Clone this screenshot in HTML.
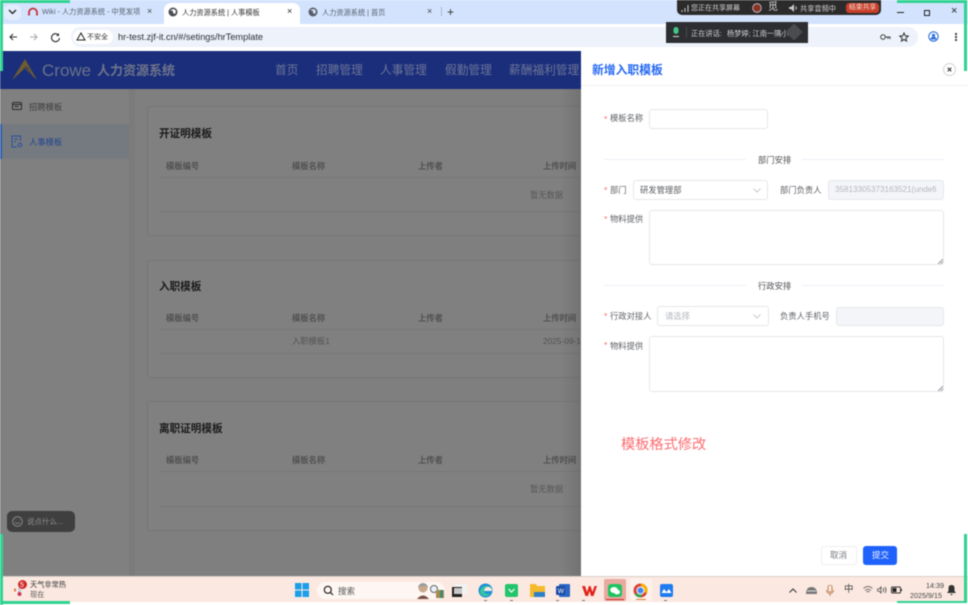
<!DOCTYPE html>
<html lang="zh"><head><meta charset="utf-8"><title>人力资源系统 | 人事模板</title>
<style>
*{box-sizing:border-box}
html,body{margin:0;padding:0;width:968px;height:605px;overflow:hidden;background:#fff}
body{font-family:"Liberation Sans","Noto Sans CJK SC",sans-serif}
#r{position:absolute;left:0;top:0;width:968px;height:605px;overflow:hidden;filter:blur(.5px)}
.a{position:absolute}
.t{position:absolute;white-space:nowrap;line-height:1}
.card{position:absolute;left:147px;width:470px;border:1px solid #777;border-right:0;background:#808080;border-radius:3px}
.ln{position:absolute;height:1px;background:#787878;left:159px;width:422px}
.th{position:absolute;white-space:nowrap;line-height:1;font-size:8.3px;color:#505050;font-weight:bold}
.h{position:absolute;white-space:nowrap;line-height:1;font-size:10.6px;color:#1a1a1a;font-weight:bold;left:159px}
.nav{position:absolute;white-space:nowrap;line-height:1;font-size:11.7px;color:#6f7697;top:64.500px}
.lab{position:absolute;white-space:nowrap;line-height:1;font-size:8.3px;color:#606266}
.st{position:absolute;white-space:nowrap;line-height:1;font-size:8.5px;color:#f56c6c;left:604px}
.inp{position:absolute;border:1px solid #e4e7ed;border-radius:3px;background:#fff}
.dis{background:#f4f5f9}
.g{position:absolute;background:#2ed392}
.sec{position:absolute;white-space:nowrap;line-height:1;font-size:8.3px;color:#505255;left:758px}
.dv{position:absolute;height:1px;background:#ebeef5}
</style></head><body><div id="r">

<!-- tab strip -->
<div class="a" style="left:0;top:0;width:968px;height:24px;background:#d3e3fd"></div>
<div class="a" style="left:4px;top:5px;width:17px;height:15px;background:#e4edfd;border-radius:5px"></div>
<svg class="a" style="left:8px;top:9px" width="9" height="6"><path d="M1 1l3.500 3.500L8 1" fill="none" stroke="#222" stroke-width="1.300"/></svg>
<svg class="a" style="left:27px;top:7px" width="12" height="9"><path d="M2 8.500V5.500a4 4 0 0 1 8 0v3" fill="none" stroke="#c8303a" stroke-width="1.800"/></svg>
<div class="t" style="left:42px;top:8px;font-size:7.200px;color:#555d6b;width:98px;overflow:hidden">Wiki - 人力资源系统 - 中竞发项目</div>
<div class="t" style="left:147px;top:7px;font-size:9px;color:#444">×</div>
<div class="a" style="left:164px;top:3px;width:136px;height:21px;background:#fff;border-radius:7px 7px 0 0"></div>
<svg class="a" style="left:168px;top:7px" width="10" height="10"><circle cx="5" cy="5" r="4.500" fill="#4a4d52"/><path d="M2 3l3 1 0 2 2 1 1-3-2-2z" fill="#fff"/></svg>
<div class="t" style="left:182px;top:8.500px;font-size:7.200px;color:#333">人力资源系统 | 人事模板</div>
<div class="t" style="left:287px;top:7px;font-size:9px;color:#222">×</div>
<svg class="a" style="left:308px;top:7px" width="10" height="10"><circle cx="5" cy="5" r="4.500" fill="#5a5e66"/><path d="M2 3l3 1 0 2 2 1 1-3-2-2z" fill="#d3e3fd"/></svg>
<div class="t" style="left:322px;top:8.500px;font-size:7.200px;color:#555d6b">人力资源系统 | 首页</div>
<div class="t" style="left:427px;top:7px;font-size:9px;color:#444">×</div>
<div class="a" style="left:441px;top:7px;width:1px;height:9px;background:#a9b8d4"></div>
<div class="t" style="left:447px;top:6px;font-size:12px;color:#333">+</div>
<div class="a" style="left:897px;top:12px;width:7px;height:1px;background:#222"></div>
<div class="a" style="left:924px;top:10px;width:6px;height:6px;border:1px solid #222;background:#d3e3fd"></div>
<div class="t" style="left:951px;top:6px;font-size:11px;color:#222">×</div>

<!-- toolbar -->
<div class="a" style="left:0;top:24px;width:968px;height:27px;background:#fff"></div>
<div class="a" style="left:71px;top:27px;width:847px;height:20px;background:#eef2fb;border-radius:10px"></div>
<div class="a" style="left:73px;top:30px;width:40px;height:14px;background:#fff;border-radius:7px"></div>
<svg class="a" style="left:8px;top:32px" width="10" height="10"><path d="M9 5H2M5 2L2 5l3 3" fill="none" stroke="#333" stroke-width="1.100"/></svg>
<svg class="a" style="left:29px;top:32px" width="10" height="10"><path d="M1 5h7M5 2l3 3-3 3" fill="none" stroke="#aaa" stroke-width="1.100"/></svg>
<svg class="a" style="left:50px;top:32px" width="11" height="11"><path d="M8.500 3A4 4 0 1 0 9.500 6" fill="none" stroke="#333" stroke-width="1.100"/><path d="M9 1v3H6z" fill="#333"/></svg>
<svg class="a" style="left:76px;top:32px" width="10" height="9"><path d="M5 1l4 7H1z" fill="none" stroke="#222" stroke-width="1"/></svg>
<div class="t" style="left:87px;top:34px;font-size:7px;color:#333">不安全</div>
<div class="t" style="left:118px;top:32.500px;font-size:9.200px;color:#2a2d33">hr-test.zjf-it.cn/#/setings/hrTemplate</div>
<svg class="a" style="left:880px;top:33px" width="11" height="9"><circle cx="3" cy="4" r="2.300" fill="none" stroke="#444"/><path d="M5 4h5v2M8 4v2" fill="none" stroke="#444"/></svg>
<svg class="a" style="left:899px;top:32px" width="10" height="10"><path d="M5 1l1.200 2.800 3 .3-2.300 2 .7 3L5 7.500 2.400 9.100l.7-3-2.300-2 3-.3z" fill="none" stroke="#333"/></svg>
<svg class="a" style="left:928px;top:31px" width="11" height="11"><circle cx="5.500" cy="5.500" r="4.700" fill="none" stroke="#2f6fd8" stroke-width="1.100"/><circle cx="5.500" cy="4.300" r="1.600" fill="#2f6fd8"/><path d="M2.500 8.500a3 3 0 0 1 6 0" fill="#2f6fd8"/></svg>
<div class="a" style="left:955px;top:33px;width:2px;height:2px;background:#444;box-shadow:0 3px #444,0 6px #444"></div>

<!-- app header -->
<div class="a" style="left:0;top:51px;width:581px;height:38px;background:#1a2e7c"></div>
<svg class="a" style="left:12px;top:59px" width="25" height="22"><path d="M13 0L0 21 12 10l1 0 12 11z" fill="#6f5c2e"/><path d="M13 8L7 21M14 8l3 13M15 8l7 13" stroke="#1a2e7c" stroke-width=".7"/></svg>
<div class="t" style="left:42px;top:61.500px;font-size:17px;color:#6b7189">Crowe</div>
<div class="t" style="left:97px;top:63.500px;font-size:13px;font-weight:bold;color:#6f7589">人力资源系统</div>
<div class="nav" style="left:275px">首页</div>
<div class="nav" style="left:316px">招聘管理</div>
<div class="nav" style="left:380px">人事管理</div>
<div class="nav" style="left:445px">假勤管理</div>
<div class="nav" style="left:509px">薪酬福利管理</div>

<!-- page background -->
<div class="a" style="left:0;top:89px;width:581px;height:488px;background:#808080"></div>
<div class="a" style="left:129px;top:89px;width:6px;height:488px;background:#7b7b7b"></div>
<div class="a" style="left:135px;top:89px;width:446px;height:482px;background:#7f7f7f"></div>
<div class="a" style="left:0;top:124px;width:129px;height:35px;background:#757a80"></div>
<div class="a" style="left:0;top:124px;width:2px;height:35px;background:#2c5cab"></div>
<svg class="a" style="left:12px;top:101px" width="10" height="10"><rect x=".5" y="1.500" width="9" height="7" rx="1" fill="none" stroke="#2a2a2a"/><path d="M1 3.500h8M2.500 5.500h4" stroke="#2a2a2a"/></svg>
<div class="t" style="left:29px;top:102.500px;font-size:8.300px;color:#3d3d3d">招聘模板</div>
<svg class="a" style="left:11px;top:135px" width="12" height="13"><path d="M9.500 6V1H1v11h5M3 4h4M3 6.500h2" fill="none" stroke="#274f9e"/><circle cx="9" cy="10" r="1.800" fill="none" stroke="#274f9e"/></svg>
<div class="t" style="left:29px;top:137.500px;font-size:8.300px;color:#22468f">人事模板</div>
<div class="a" style="left:7px;top:511px;width:68px;height:21px;background:#3f3f3f;border-radius:5px"></div>
<svg class="a" style="left:12px;top:516px" width="11" height="11"><circle cx="5.500" cy="5.500" r="4.800" fill="none" stroke="#888"/><path d="M3 6.500q2.500 2 5 0" fill="none" stroke="#888"/><path d="M3.500 4h.8M7 4h.8" stroke="#888"/></svg>
<div class="t" style="left:27px;top:518px;font-size:7.500px;color:#8f8f8f">说点什么...</div>

<!-- cards -->
<div class="card" style="top:106px;height:130px"></div>
<div class="h" style="top:128.500px">开证明模板</div>
<div class="th" style="left:166px;top:161.500px">模板编号</div><div class="th" style="left:292px;top:161.500px">模板名称</div><div class="th" style="left:418px;top:161.500px">上传者</div><div class="th" style="left:543px;top:161.500px">上传时间</div>
<div class="ln" style="top:177px"></div><div class="ln" style="top:211px"></div>
<div class="t" style="left:530px;top:190.500px;font-size:8.300px;color:#565656">暂无数据</div>

<div class="card" style="top:260px;height:118px"></div>
<div class="h" style="top:281.500px">入职模板</div>
<div class="th" style="left:166px;top:314px">模板编号</div><div class="th" style="left:292px;top:314px">模板名称</div><div class="th" style="left:418px;top:314px">上传者</div><div class="th" style="left:543px;top:314px">上传时间</div>
<div class="ln" style="top:329px"></div><div class="ln" style="top:353px"></div>
<div class="t" style="left:292px;top:337px;font-size:8.300px;color:#525252">入职模板1</div>
<div class="t" style="left:543px;top:337px;font-size:8.300px;color:#525252">2025-09-1</div>

<div class="card" style="top:401px;height:130px"></div>
<div class="h" style="top:423.500px">离职证明模板</div>
<div class="th" style="left:166px;top:456px">模板编号</div><div class="th" style="left:292px;top:456px">模板名称</div><div class="th" style="left:418px;top:456px">上传者</div><div class="th" style="left:543px;top:456px">上传时间</div>
<div class="ln" style="top:471px"></div><div class="ln" style="top:506px"></div>
<div class="t" style="left:530px;top:485px;font-size:8.300px;color:#565656">暂无数据</div>
<div class="a" style="left:560px;top:89px;width:21px;height:488px;background:linear-gradient(90deg,rgba(0,0,0,0),rgba(0,0,0,.1))"></div>

<!-- drawer -->
<div class="a" style="left:581px;top:51px;width:387px;height:526px;background:#fff"></div>
<div class="a" style="left:581px;top:85px;width:387px;height:1px;background:#f0f0f2"></div>
<div class="t" style="left:592px;top:64.500px;font-size:11.800px;font-weight:bold;color:#2468f2">新增入职模板</div>
<svg class="a" style="left:943px;top:63px" width="13" height="13"><circle cx="6.500" cy="6.500" r="6" fill="#fff" stroke="#d4d4d4"/><path d="M4.700 4.700l3.600 3.600M8.300 4.700l-3.600 3.600" stroke="#444" stroke-width="1.200"/></svg>

<div class="st" style="top:115px">*</div><div class="lab" style="left:610px;top:114px">模板名称</div>
<div class="inp" style="left:649px;top:109px;width:119px;height:20px"></div>

<div class="dv" style="left:604px;top:159px;width:142px"></div>
<div class="sec" style="top:156px">部门安排</div>
<div class="dv" style="left:802px;top:159px;width:142px"></div>

<div class="st" style="top:186px">*</div><div class="lab" style="left:610px;top:186px">部门</div>
<div class="inp" style="left:633px;top:180px;width:135px;height:20px"></div>
<div class="t" style="left:640px;top:186px;font-size:8.300px;color:#5a5c60">研发管理部</div>
<svg class="a" style="left:753px;top:188px" width="8" height="5"><path d="M.5 .5L4 4 7.500 .5" fill="none" stroke="#b8bcc4" stroke-width=".8"/></svg>
<div class="lab" style="left:780px;top:186px">部门负责人</div>
<div class="inp dis" style="left:828px;top:180px;width:116px;height:20px"></div>
<div class="t" style="left:835px;top:186px;font-size:8.100px;color:#b4b7bd;width:104px;overflow:hidden">35813305373163521(undefi</div>

<div class="st" style="top:215px">*</div><div class="lab" style="left:610px;top:215px">物料提供</div>
<div class="inp" style="left:649px;top:210px;width:295px;height:55px"></div>
<svg class="a" style="left:938px;top:259px" width="5" height="5"><path d="M0 5L5 0M2.500 5L5 2.500" stroke="#888" stroke-width=".8"/></svg>

<div class="dv" style="left:604px;top:285px;width:142px"></div>
<div class="sec" style="top:282px">行政安排</div>
<div class="dv" style="left:802px;top:285px;width:142px"></div>

<div class="st" style="top:312px">*</div><div class="lab" style="left:610px;top:312px">行政对接人</div>
<div class="inp" style="left:657px;top:306px;width:112px;height:20px"></div>
<div class="t" style="left:665px;top:312px;font-size:8.300px;color:#b4b7bd">请选择</div>
<svg class="a" style="left:753px;top:314px" width="8" height="5"><path d="M.5 .5L4 4 7.500 .5" fill="none" stroke="#b8bcc4" stroke-width=".8"/></svg>
<div class="lab" style="left:780px;top:312px">负责人手机号</div>
<div class="inp dis" style="left:836px;top:307px;width:108px;height:19px"></div>

<div class="st" style="top:341px">*</div><div class="lab" style="left:610px;top:341.500px">物料提供</div>
<div class="inp" style="left:649px;top:336px;width:295px;height:56px"></div>
<svg class="a" style="left:938px;top:386px" width="5" height="5"><path d="M0 5L5 0M2.500 5L5 2.500" stroke="#888" stroke-width=".8"/></svg>

<div class="t" style="left:621px;top:437.500px;font-size:14.200px;color:#ff6b70">模板格式修改</div>

<div class="a" style="left:821px;top:546px;width:36px;height:19px;border:1px solid #eee;border-radius:3px;background:#fff"></div>
<div class="t" style="left:830px;top:551px;font-size:8.500px;color:#77797d">取消</div>
<div class="a" style="left:863px;top:546px;width:34px;height:19px;border-radius:3px;background:#1f62fb"></div>
<div class="t" style="left:872px;top:551px;font-size:8.500px;color:#e8efff">提交</div>

<!-- meeting overlays -->
<div class="a" style="left:677px;top:0;width:204px;height:15px;background:#2b2b2b;border-radius:0 0 5px 5px"></div>
<svg class="a" style="left:681px;top:5px" width="9" height="7"><path d="M1 7V5M4 7V3M7 7V0" stroke="#ccc" stroke-width="1"/></svg>
<div class="t" style="left:691px;top:4.500px;font-size:7px;color:#d2d2d2">您正在共享屏幕</div>
<svg class="a" style="left:752px;top:3px" width="10" height="10"><circle cx="5" cy="5" r="4.300" fill="#8a3228" stroke="#ccc" stroke-width=".8"/></svg>
<div class="t" style="left:768px;top:3px;font-size:10px;color:#ddd">觅</div>
<svg class="a" style="left:789px;top:4px" width="9" height="8"><path d="M0 3h2l3-3v8L2 5H0z" fill="#ccc"/><path d="M6.500 2.500q1.500 1.500 0 3" stroke="#ccc" fill="none"/></svg>
<div class="t" style="left:800px;top:4.500px;font-size:7.200px;color:#d2d2d2">共享音频中</div>
<div class="a" style="left:846px;top:3px;width:33px;height:10px;background:#c9402a;border-radius:3px"></div>
<div class="t" style="left:849px;top:5px;font-size:6.800px;color:#f0d8d0">结束共享</div>

<div class="a" style="left:666px;top:22px;width:142px;height:21px;background:#2c2e31"></div>
<svg class="a" style="left:672px;top:27px" width="8" height="11"><rect x="1.500" y="0" width="5" height="7" rx="2.500" fill="#43c786"/><path d="M1 9.500h6" stroke="#ddd"/></svg>
<div class="a" style="left:686px;top:27px;width:1px;height:11px;background:#4a4a4a"></div>
<div class="t" style="left:691px;top:29.500px;font-size:7.200px;color:#cfcfcf">正在讲话:</div>
<div class="t" style="left:727px;top:29.500px;font-size:7.200px;color:#cfcfcf">杨梦婷; 江南一隅小...</div>
<div class="a" style="left:788px;top:26px;width:12px;height:12px;background:#4a4c4f;transform:rotate(45deg)"></div>

<!-- taskbar -->
<div class="a" style="left:0;top:576px;width:968px;height:1px;background:#d8cfca"></div>
<div class="a" style="left:0;top:577px;width:968px;height:25px;background:#fbe9e1"></div>
<div class="a" style="left:0;top:602px;width:968px;height:3px;background:#fff"></div>
<svg class="a" style="left:12px;top:582px" width="14" height="15"><path d="M2 7q2-2 2 1t-2 1z" fill="#e8743a"/><rect x="6" y="5" width="3" height="8" rx="1.500" fill="#c9cfe0"/><circle cx="7.500" cy="12" r="2" fill="#c83a5c"/></svg>
<div class="a" style="left:18px;top:580px;width:9px;height:9px;border-radius:50%;background:#cf2a27"></div>
<div class="t" style="left:20px;top:581.500px;font-size:7px;color:#fff">5</div>
<div class="t" style="left:30px;top:581px;font-size:7.200px;color:#333">天气非常热</div>
<div class="t" style="left:30px;top:591px;font-size:7.200px;color:#555">现在</div>

<svg class="a" style="left:295px;top:583px" width="14" height="14"><path d="M0 0h6.500v6.500H0zM7.500 0H14v6.500H7.500zM0 7.500h6.500V14H0zM7.500 7.500H14V14H7.500z" fill="#1c9fe8"/></svg>
<div class="a" style="left:317px;top:582px;width:128px;height:17px;background:#fdf6f2;border-radius:9px"></div>
<svg class="a" style="left:323px;top:585px" width="11" height="11"><circle cx="4.800" cy="4.800" r="3.500" fill="none" stroke="#222" stroke-width="1.200"/><path d="M7.500 7.500l2.500 2.500" stroke="#222" stroke-width="1.200"/></svg>
<div class="t" style="left:338px;top:586.500px;font-size:8.500px;color:#555">搜索</div>
<svg class="a" style="left:417px;top:582px" width="27" height="17"><circle cx="6" cy="6" r="4.500" fill="#c9a88e"/><path d="M1 6a5 5 0 0 1 10 0l-2-2H3z" fill="#9a9a9a"/><path d="M0 17q6-7 12 0z" fill="#7a4d44"/><circle cx="17" cy="7" r="3.500" fill="#e8f2fa" stroke="#666"/><rect x="19" y="8" width="8" height="8" fill="#a88a4a"/><rect x="23" y="8" width="3" height="8" fill="#3f8a78"/></svg>
<svg class="a" style="left:452px;top:584px" width="15" height="13"><rect x="3" y="0" width="12" height="10" fill="#f2f2f2"/><rect x="0" y="3" width="10" height="10" fill="#222"/><rect x="2" y="4" width="8" height="6" fill="#c8c8c8"/></svg>
<svg class="a" style="left:478px;top:583px" width="15" height="15"><circle cx="7.500" cy="7.500" r="7" fill="#1d8fd8"/><path d="M2 8q2-6 8-5 4 1 4 5H6q0 3 6 3-3 3-6 2-4-1-4-5z" fill="#37c5a0"/><path d="M6 8h8q0-3-3-4-4-1-5 4z" fill="#fbe9e1"/></svg>
<svg class="a" style="left:505px;top:584px" width="13" height="13"><rect width="13" height="13" rx="2" fill="#22c56a"/><path d="M3.500 5l3 3 3-3" fill="none" stroke="#fff" stroke-width="1.200"/></svg>
<svg class="a" style="left:530px;top:584px" width="15" height="13"><path d="M0 0h6l1 2h8v11H0z" fill="#f5b92e"/><rect x="4" y="8" width="11" height="5" fill="#2c7fc9"/></svg>
<svg class="a" style="left:556px;top:584px" width="14" height="13"><rect x="3" width="11" height="13" rx="1" fill="#2c66c5"/><rect y="2" width="9" height="9" rx="1" fill="#1a4ca8"/><text x="1.700" y="9" font-size="6.500" fill="#fff" font-family="Liberation Sans">W</text></svg>
<svg class="a" style="left:582px;top:585px" width="15" height="11"><path d="M0 1h3l2 6 2-6h1.500l2 6 2-6H15l-3.500 10H9L7.500 6 6 11H3.500z" fill="#e2231a"/></svg>
<div class="a" style="left:604px;top:579px;width:22px;height:22px;background:#e9a8a0;border-radius:2px"></div>
<svg class="a" style="left:608px;top:584px" width="14" height="13"><rect width="14" height="13" rx="3" fill="#1dc45f"/><ellipse cx="6" cy="6" rx="3.800" ry="3" fill="#fff"/><ellipse cx="9" cy="8" rx="3" ry="2.400" fill="#fff"/></svg>
<div class="a" style="left:606px;top:599px;width:18px;height:1px;background:#c8322b"></div>
<div class="a" style="left:630px;top:579px;width:22px;height:22px;background:#fcf1ec;border-radius:2px"></div>
<svg class="a" style="left:633px;top:583px" width="15" height="15"><circle cx="7.500" cy="7.500" r="7" fill="#db4437"/><path d="M7.500 .5a7 7 0 0 1 6.400 10L10 8z" fill="#f4b400"/><path d="M1.500 11a7 7 0 0 0 6 3.500l3-5z" fill="#2fa854"/><circle cx="7.500" cy="7.500" r="3.500" fill="#4285f4" stroke="#fff"/></svg>
<div class="a" style="left:636px;top:599px;width:10px;height:1px;background:#d8822b"></div>
<svg class="a" style="left:660px;top:584px" width="13" height="13"><rect width="13" height="13" rx="2" fill="#1f7cf0"/><path d="M1.500 9l2.500-4 2.500 3 2.500-3 2.500 4z" fill="#fff"/></svg>
<div class="a" style="left:484px;top:599.500px;width:3px;height:1px;background:#777;box-shadow:26px 0 #777,72px 0 #777,98px 0 #777,180px 0 #777"></div>

<svg class="a" style="left:789px;top:588px" width="8" height="5"><path d="M.5 4.500L4 1l3.500 3.500" fill="none" stroke="#333"/></svg>
<svg class="a" style="left:806px;top:586px" width="11" height="8"><path d="M0 8q0-7 5.500-7T11 8z" fill="#777"/><path d="M1 5h9" stroke="#ddd"/></svg>
<svg class="a" style="left:826px;top:585px" width="8" height="11"><rect x="2" y="0" width="4" height="7" rx="2" fill="none" stroke="#c0855a"/><path d="M.5 5a3.500 3.500 0 0 0 7 0M4 9v2" fill="none" stroke="#c0855a"/></svg>
<div class="t" style="left:844px;top:585px;font-size:9.500px;color:#444">中</div>
<svg class="a" style="left:863px;top:586px" width="10" height="8"><path d="M.5 2.500q4.500-4 9 0M2 4.500q3-2.500 6 0M3.500 6q1.500-1 3 0" fill="none" stroke="#444" stroke-width=".8"/></svg>
<svg class="a" style="left:877px;top:586px" width="10" height="8"><path d="M0 3h2l2-2v6L2 5H0z" fill="none" stroke="#444" stroke-width=".8"/><path d="M6 2q1.500 2 0 4M8 1q2 3 0 6" fill="none" stroke="#444" stroke-width=".8"/></svg>
<svg class="a" style="left:891px;top:586px" width="11" height="8"><rect x=".5" y="1" width="9" height="6" rx="1" fill="none" stroke="#333"/><rect x="1.500" y="2" width="4" height="4" fill="#222"/><path d="M10.500 3v2" stroke="#333"/></svg>
<div class="t" style="left:926px;top:582px;font-size:7.200px;color:#444">14:39</div>
<div class="t" style="left:910px;top:592px;font-size:7.200px;color:#444">2025/9/15</div>
<svg class="a" style="left:947px;top:585px" width="9" height="10"><path d="M4.500 0q3 0 3 3v3l1.500 2H0l1.500-2V3q0-3 3-3zM3.500 9h2v1h-2z" fill="#333"/></svg>

<!-- green share frame -->
<div class="g" style="left:0;top:0;width:70px;height:3px"></div>
<div class="g" style="left:0;top:0;width:3px;height:71px"></div>
<div class="g" style="left:0;top:534px;width:3px;height:71px"></div>
<div class="g" style="left:0;top:601px;width:70px;height:3px"></div>
<div class="g" style="left:897px;top:0;width:70px;height:3px"></div>
<div class="g" style="left:964px;top:0;width:3px;height:71px"></div>
<div class="g" style="left:964px;top:534px;width:3px;height:69px"></div>
<div class="g" style="left:897px;top:601px;width:70px;height:2px"></div>
</div></body></html>
